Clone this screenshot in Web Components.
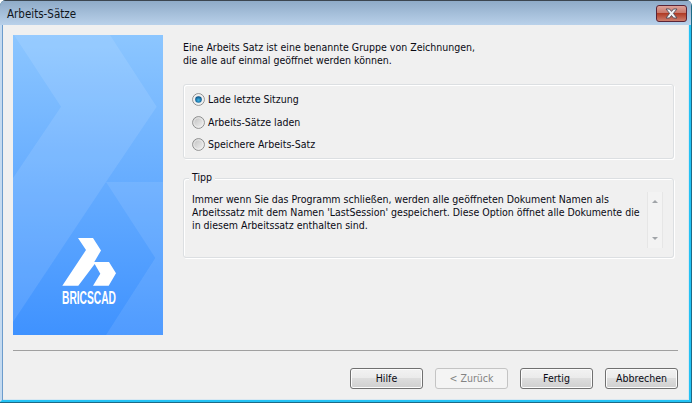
<!DOCTYPE html>
<html lang="de">
<head>
<meta charset="utf-8">
<title>Arbeits-Sätze</title>
<style>
  html, body { margin: 0; height: 100%; background: #fff; }
  body { font: 10.5px/13px "DejaVu Sans Condensed", "DejaVu Sans", sans-serif; color: #0a0a14; }
</style>
</head>
<body>
<wizard-window caption="Arbeits-Sätze">
  <brand-panel slot="side"></brand-panel>

  <intro-text>Eine Arbeits Satz ist eine benannte Gruppe von Zeichnungen,<br>die alle auf einmal geöffnet werden können.</intro-text>

  <group-box>
    <radio-option checked>Lade letzte Sitzung</radio-option>
    <radio-option>Arbeits-Sätze laden</radio-option>
    <radio-option>Speichere Arbeits-Satz</radio-option>
  </group-box>

  <tip-box legend="Tipp">Immer wenn Sie das Programm schließen, werden alle geöffneten Dokument Namen als<br>Arbeitssatz mit dem Namen 'LastSession' gespeichert. Diese Option öffnet alle Dokumente die<br>in diesem Arbeitssatz enthalten sind.</tip-box>

  <push-button slot="buttons">Hilfe</push-button>
  <push-button slot="buttons" disabled>&lt; Zurück</push-button>
  <push-button slot="buttons">Fertig</push-button>
  <push-button slot="buttons">Abbrechen</push-button>
</wizard-window>

<script>
class WizardWindow extends HTMLElement {
  constructor() {
    super();
    this.shadowDOM = this.attachShadow({ mode: 'open' });
  }

  connectedCallback() {
    this.shadowDOM.innerHTML = `
      <style>
        :host { display: flex; flex-direction: column; box-sizing: border-box; width: 692px; height: 403px; padding: 0 1px 1px 0; background: #1d6a86; border-radius: 6px 6px 0 0; overflow: hidden; }
        .title { flex: none; display: flex; justify-content: space-between; height: 25px; box-sizing: border-box; padding: 6px 4px 0 7px; background: linear-gradient(#8fabc8, #b9d1ea); border-top: 1px solid #3c4650; font-size: 11.5px; line-height: 14px; color: #10161c; }
        .frame { flex: 1; display: flex; flex-direction: column; min-height: 0; padding-left: 1px; background: #f0f0f0; border: solid #c4daf0; border-width: 0 2px 2px 2px; border-right-color: #22c2f4; border-bottom-color: #22c2f4; box-shadow: inset 1px 0 0 #6c9ccc, inset -1px 0 0 #d8e8f2, inset 0 -1px 0 #d8e8f2; }
        .main { flex: none; display: flex; gap: 20px; padding: 10px 15px 0 10px; height: 300px; }
        .content { flex: 1; min-width: 0; display: flex; flex-direction: column; }
        hr { flex: none; height: 1px; margin: 15px 11px 0 10px; border: 0; background: #a0a0a0; }
        .buttons { flex: none; display: flex; justify-content: flex-end; gap: 12px; padding: 17px 11px 0 0; }
        .close { width: 31px; height: 17px; margin-top: -2px; display: block; }
      </style>
      <div class="title">
        <span>${this.getAttribute('caption')}</span>
        <svg class="close" viewBox="0 0 31 17">
          <defs>
            <linearGradient id="red" x1="0" y1="0" x2="0" y2="1">
              <stop offset="0" stop-color="#dfa59c"/>
              <stop offset=".45" stop-color="#c9796c"/>
              <stop offset=".5" stop-color="#b03c26"/>
              <stop offset="1" stop-color="#cf8272"/>
            </linearGradient>
          </defs>
          <rect x=".5" y=".5" width="30" height="16" rx="2.5" fill="url(#red)" stroke="#5a2436"/>
          <path d="M10 4h3.5l2 2.4 2-2.4H21l-3.600 4.400L21 13h-3.500l-2-2.500-2 2.500H10l3.600-4.600z" fill="#f2f2f4" stroke="#4a4a58" stroke-width=".9"/>
        </svg>
      </div>
      <div class="frame">
        <div class="main">
          <slot name="side"></slot>
          <div class="content"><slot></slot></div>
        </div>
        <hr>
        <div class="buttons"><slot name="buttons"></slot></div>
      </div>
    `;
  }
}

class BrandPanel extends HTMLElement {
  constructor() {
    super();
    this.shadowDOM = this.attachShadow({ mode: 'open' });
  }

  connectedCallback() {
    // coords are relative to the panel, 150x300
    this.shadowDOM.innerHTML = `
      <style>
        :host { display: block; flex: none; width: 150px; height: 300px; }
        svg { display: block; }
      </style>
      <svg width="150" height="300" viewBox="0 0 150 300">
        <defs>
          <linearGradient id="sky" x1="0" y1="0" x2="0" y2="1">
            <stop offset="0" stop-color="#8cc6ff"/>
            <stop offset="1" stop-color="#3f92ff"/>
          </linearGradient>
        </defs>
        <rect width="150" height="300" fill="url(#sky)"/>
        <path d="M1 0H97L143.700 71.700 93 147 0 287V143L48 71.700z" fill="#fff" fill-opacity=".1"/>
        <path d="M93 147H150V300H93L142.300 223z" fill="#fff" fill-opacity=".09"/>
        <path d="M65 203H80L88 215.500 81.300 227H96L103 238.300 95.700 250.700H80L87.300 238.700 81.700 229 65.300 250.700H49.300L73 215z" fill="#fff"/>
        <text x="49" y="268.800" textLength="54" lengthAdjust="spacingAndGlyphs" font-family="Liberation Sans, Arial, sans-serif" font-size="17.500" font-weight="700" fill="#fff">BRICSCAD</text>
      </svg>
    `;
  }
}

class IntroText extends HTMLElement {
  constructor() {
    super();
    this.shadowDOM = this.attachShadow({ mode: 'open' });
    this.shadowDOM.innerHTML = `
      <style>:host { display: block; height: 49px; padding-top: 6px; box-sizing: border-box; white-space: nowrap; }</style>
      <slot></slot>
    `;
  }
}

class GroupBox extends HTMLElement {
  constructor() {
    super();
    this.shadowDOM = this.attachShadow({ mode: 'open' });
    this.shadowDOM.innerHTML = `
      <style>
        :host { display: flex; flex-direction: column; gap: 9.500px; box-sizing: border-box; height: 75px; padding: 8px 0 0 8px; border: 1px solid #dcdfe2; border-radius: 3px; box-shadow: inset 1px 1px 0 #fff, 1px 1px 0 #fff; }
      </style>
      <slot></slot>
    `;
  }
}

class RadioOption extends HTMLElement {
  constructor() {
    super();
    this.shadowDOM = this.attachShadow({ mode: 'open' });
  }

  connectedCallback() {
    const checked = this.hasAttribute('checked');
    this.shadowDOM.innerHTML = `
      <style>
        :host { display: flex; align-items: center; gap: 3px; height: 13px; }
        svg { flex: none; display: block; }
      </style>
      <svg width="13" height="13" viewBox="0 0 13 13">
        <defs>
          <linearGradient id="off" x1="0" y1="0" x2="1" y2="1">
            <stop offset="0" stop-color="#bdbdbd"/>
            <stop offset="1" stop-color="#f6f6f6"/>
          </linearGradient>
          <radialGradient id="on" cx=".5" cy=".6" r=".6">
            <stop offset="0" stop-color="#3fb6e6"/>
            <stop offset="1" stop-color="#064a80"/>
          </radialGradient>
        </defs>
        <circle cx="6.500" cy="6.500" r="5.900" fill="${checked ? '#eeeeee' : 'url(#off)'}" stroke="#8e8f8f"/>
        <circle cx="6.500" cy="6.500" r="4.700" fill="none" stroke="#f4f4f4" stroke-opacity=".7"/>
        ${checked ? '<circle cx="6.500" cy="6.500" r="3.300" fill="url(#on)"/>' : ''}
      </svg>
      <span><slot></slot></span>
    `;
  }
}

class TipBox extends HTMLElement {
  constructor() {
    super();
    this.shadowDOM = this.attachShadow({ mode: 'open' });
  }

  connectedCallback() {
    this.shadowDOM.innerHTML = `
      <style>
        :host { display: block; position: relative; box-sizing: border-box; height: 80px; margin-top: 19px; padding: 14px 10px 0 8px; border: 1px solid #dcdfe2; border-radius: 3px; box-shadow: inset 1px 1px 0 #fff, 1px 1px 0 #fff; }
        .legend { position: absolute; left: 5px; top: -8px; padding: 0 3px; background: #f0f0f0; }
        .row { display: flex; }
        .text { flex: 1; min-width: 0; white-space: nowrap; }
      </style>
      <span class="legend">${this.getAttribute('legend')}</span>
      <div class="row">
        <div class="text"><slot></slot></div>
        <scroll-strip></scroll-strip>
      </div>
    `;
  }
}

class ScrollStrip extends HTMLElement {
  constructor() {
    super();
    this.shadowDOM = this.attachShadow({ mode: 'open' });
    this.shadowDOM.innerHTML = `
      <style>
        :host { display: flex; flex: none; flex-direction: column; justify-content: space-between; align-items: center; box-sizing: border-box; width: 16px; height: 56px; padding: 8px 0; margin-top: -1px; background: #f3f3f3; border-left: 1px solid #e6e6e6; border-right: 1px solid #e6e6e6; }
        i { width: 0; height: 0; border: 3.500px solid transparent; }
        .up { border-top: 0; border-bottom-color: #a0a4a8; }
        .down { border-bottom: 0; border-top-color: #a0a4a8; }
      </style>
      <i class="up"></i>
      <i class="down"></i>
    `;
  }
}

class PushButton extends HTMLElement {
  constructor() {
    super();
    this.shadowDOM = this.attachShadow({ mode: 'open' });
    this.shadowDOM.innerHTML = `
      <style>
        :host { display: flex; align-items: center; justify-content: center; box-sizing: border-box; width: 73px; height: 21px; border: 1px solid #707070; border-radius: 3px; background: linear-gradient(#f2f2f2 0, #ebebeb 45%, #dddddd 50%, #cfcfcf 100%); box-shadow: inset 0 0 0 1px #fcfcfc; }
        :host([disabled]) { border-color: #c4c4c4; background: #f4f4f4; box-shadow: none; color: #838383; }
      </style>
      <slot></slot>
    `;
  }
}

customElements.define('wizard-window', WizardWindow);
customElements.define('brand-panel', BrandPanel);
customElements.define('intro-text', IntroText);
customElements.define('group-box', GroupBox);
customElements.define('radio-option', RadioOption);
customElements.define('tip-box', TipBox);
customElements.define('scroll-strip', ScrollStrip);
customElements.define('push-button', PushButton);
</script>
</body>
</html>
